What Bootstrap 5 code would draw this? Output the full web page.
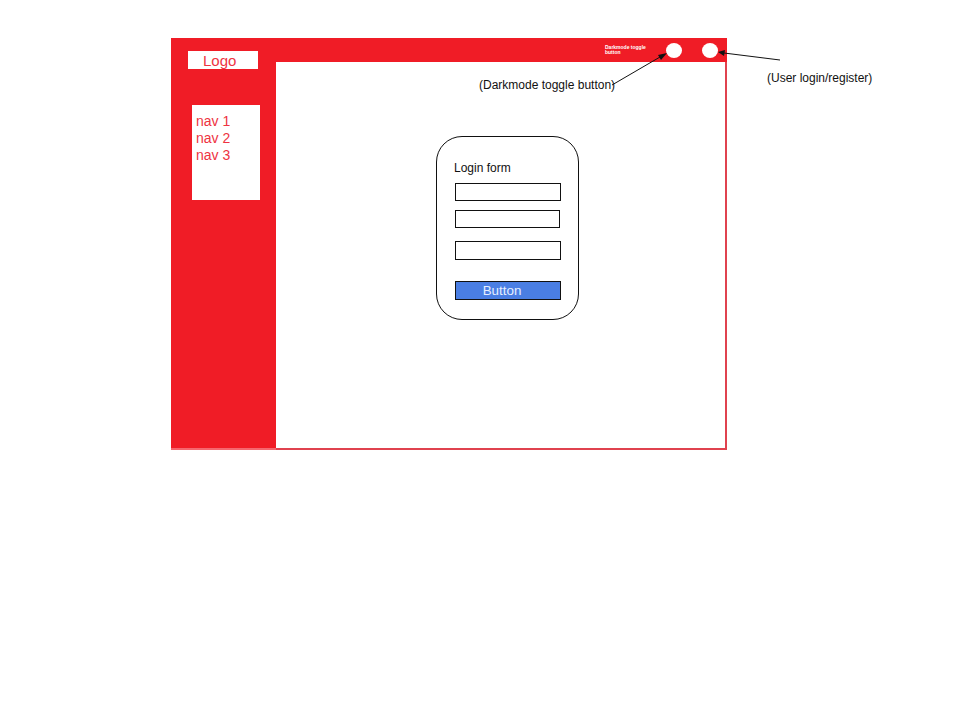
<!DOCTYPE html>
<html lang="en">
<head>
    <meta charset="UTF-8">
    <title>Login wireframe</title>
    <link href="https://cdn.jsdelivr.net/npm/bootstrap@5.3.0/dist/css/bootstrap.min.css" rel="stylesheet">
    <style>
        body {
            font-family: "Liberation Sans", Arial, sans-serif;
            background: #fff;
            color: #111;
        }
        .sketch-page {
            padding: 38px 0 0 171px;
        }
        .sketch-frame {
            width: 556px;
            height: 412px;
        }
        .side-col {
            width: 105px;
            background: #f01c26;
            border-bottom: 2px solid #f6666e;
            padding: 13px 0 0 17px;
        }
        .logo-box {
            width: 70px;
            height: 18px;
            margin-bottom: 36px;
            background: #fff;
            color: #ee3342;
            font-size: 15px;
            line-height: 20px;
            padding-left: 15px;
        }
        .nav-box {
            width: 68px;
            height: 95px;
            margin-left: 4px;
            padding: 8px 0 0 4px;
            background: #fff;
            color: #ee3342;
            font-size: 14px;
            line-height: 17px;
        }
        .top-strip {
            height: 24px;
            background: #f01c26;
            padding-left: 329px;
        }
        .mode-note {
            width: 46px;
            margin-right: 15px;
            color: #fff;
            font-size: 5px;
            font-weight: 700;
            line-height: 5px;
        }
        .round-btn {
            width: 16px;
            height: 15px;
            border-radius: 50%;
            background: #fff;
        }
        .round-gap {
            margin-right: 20px;
        }
        .main-area {
            border-right: 2px solid #e0424f;
            border-bottom: 2px solid #e0424f;
            padding: 74px 0 0 161px;
        }
        .login-box {
            width: 143px;
            height: 184px;
            margin-left: -1px;
            border: 1px solid #111;
            border-radius: 26px;
            padding: 24px 17px 0 18px;
        }
        .login-title {
            font-size: 12px;
            line-height: 14px;
            margin-bottom: 8px;
            margin-left: -1px;
        }
        .wire-input {
            display: block;
            width: 106px;
            height: 18px;
            padding: 0;
            border: 1px solid #111;
            border-radius: 0;
        }
        .wire-input.second {
            width: 105px;
            margin-top: 9px;
        }
        .wire-input.third {
            height: 19px;
            margin-top: 13px;
        }
        .wire-btn {
            display: block;
            width: 106px;
            height: 19px;
            margin-top: 21px;
            padding: 0 12px 0 0;
            background: #4a7ee3;
            border: 1px solid #111;
            border-radius: 0;
            color: #e6efff;
            font-size: 13.4px;
            line-height: 17px;
        }
        .wire-arrows {
            position: absolute;
            left: 0;
            top: 0;
            pointer-events: none;
        }
        .wire-note {
            position: absolute;
            font-size: 12px;
            line-height: 14px;
            white-space: nowrap;
        }
        .note-dark {
            left: 479px;
            top: 78px;
        }
        .note-user {
            left: 767px;
            top: 71px;
        }
    </style>
</head>
<body>
    <div class="sketch-page">
        <div class="sketch-frame d-flex">
            <aside class="side-col flex-shrink-0">
                <div class="logo-box">Logo</div>
                <div class="nav-box">
                    <div>nav 1</div>
                    <div>nav 2</div>
                    <div>nav 3</div>
                </div>
            </aside>
            <div class="d-flex flex-column flex-grow-1">
                <header class="top-strip d-flex align-items-center">
                    <div class="mode-note">Darkmode toggle button</div>
                    <div class="round-btn round-gap"></div>
                    <div class="round-btn"></div>
                </header>
                <main class="main-area flex-grow-1">
                    <form class="login-box">
                        <div class="login-title">Login form</div>
                        <input type="text" class="form-control wire-input">
                        <input type="text" class="form-control wire-input second">
                        <input type="password" class="form-control wire-input third">
                        <button type="button" class="btn wire-btn">Button</button>
                    </form>
                </main>
            </div>
        </div>
    </div>

    <span class="wire-note note-dark">(Darkmode toggle button)</span>
    <span class="wire-note note-user">(User login/register)</span>

    <svg class="wire-arrows" width="960" height="120" viewBox="0 0 960 120">
        <line x1="612" y1="85" x2="660" y2="57" stroke="#111" stroke-width="1"/>
        <polygon points="667,53 658,55 661,60" fill="#111"/>
        <line x1="780" y1="60" x2="724" y2="53" stroke="#111" stroke-width="1"/>
        <polygon points="718,52 725,50 724,56" fill="#111"/>
    </svg>

    <script src="https://cdn.jsdelivr.net/npm/bootstrap@5.3.0/dist/js/bootstrap.bundle.min.js"></script>
</body>
</html>
